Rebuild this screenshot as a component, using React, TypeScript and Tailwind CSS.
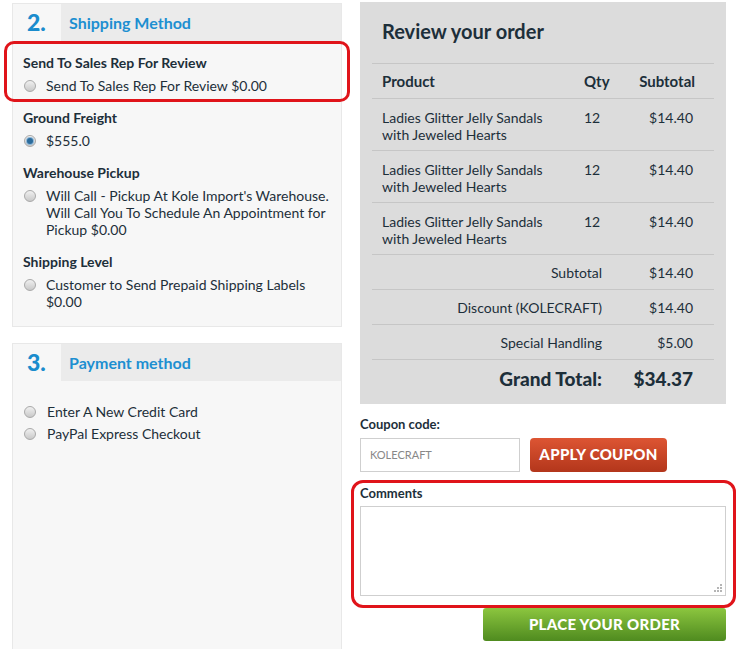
import React from "react";

const font = { fontFamily: "Lato, 'Open Sans', sans-serif" };

const items = [
  { name: "Ladies Glitter Jelly Sandals with Jeweled Hearts", qty: 12, subtotal: "$14.40" },
  { name: "Ladies Glitter Jelly Sandals with Jeweled Hearts", qty: 12, subtotal: "$14.40" },
  { name: "Ladies Glitter Jelly Sandals with Jeweled Hearts", qty: 12, subtotal: "$14.40" },
];

const totals = [
  { label: "Subtotal", value: "$14.40" },
  { label: "Discount (KOLECRAFT)", value: "$14.40" },
  { label: "Special Handling", value: "$5.00" },
];

function Radio({ checked = false }: { checked?: boolean }) {
  return (
    <span className="mt-[3px] flex h-[12px] w-[12px] shrink-0 items-center justify-center rounded-full border border-[#a9a9a9] bg-gradient-to-b from-[#f0f0f0] to-[#c9c9c9]">
      {checked && <span className="h-[6px] w-[6px] rounded-full bg-[#2c6c9c] ring-1 ring-[#8fb8d8]" />}
    </span>
  );
}

function Option({ children, checked }: { children: React.ReactNode; checked?: boolean }) {
  return (
    <label className="flex items-start gap-[10px] pl-[11px] text-[14px] leading-[17px] text-[#1d2f3a]">
      <Radio checked={checked} />
      <span>{children}</span>
    </label>
  );
}

function Group({ title, children }: { title: string; children: React.ReactNode }) {
  return (
    <div className="flex flex-col gap-[6px]">
      <div className="pl-[10px] text-[14px] font-bold leading-[17px] text-[#1d2f3a]">{title}</div>
      {children}
    </div>
  );
}

function PanelHeader({ num, title }: { num: string; title: string }) {
  return (
    <div className="flex h-[37px]">
      <div className="flex w-[48px] items-center pl-[14px] text-[23px] font-black text-[#1a8ccd]">{num}</div>
      <div className="flex flex-1 items-center bg-[#ebebeb] pl-[8px] text-[16px] font-bold text-[#1d8fd1]">{title}</div>
    </div>
  );
}

export default function App() {
  return (
    <div className="relative h-[649px] w-[739px] overflow-hidden bg-white" style={font}>
      <div className="flex gap-[18px] pt-[2px] pl-[12px]">
        {/* left column */}
        <div className="flex w-[330px] flex-col gap-[16px] pt-[1px]">
          <div className="h-[324px] border border-[#e8e8e8] bg-[#f7f7f7]">
            <PanelHeader num="2." title="Shipping Method" />
            <div className="flex flex-col gap-[15px] pt-[13px]">
              <Group title="Send To Sales Rep For Review">
                <Option>Send To Sales Rep For Review $0.00</Option>
              </Group>
              <Group title="Ground Freight">
                <Option checked>$555.0</Option>
              </Group>
              <Group title="Warehouse Pickup">
                <Option>
                  Will Call - Pickup At Kole Import's Warehouse. Will Call You To Schedule An Appointment for Pickup $0.00
                </Option>
              </Group>
              <Group title="Shipping Level">
                <Option>
                  Customer to Send Prepaid Shipping Labels
                  <br />
                  $0.00
                </Option>
              </Group>
            </div>
          </div>
          <div className="h-[320px] border border-[#e8e8e8] bg-[#f7f7f7]">
            <PanelHeader num="3." title="Payment method" />
            <div className="flex flex-col gap-[5px] pt-[22px]">
              <Option>
                <span className="pl-[1px]">Enter A New Credit Card</span>
              </Option>
              <Option>
                <span className="pl-[1px]">PayPal Express Checkout</span>
              </Option>
            </div>
          </div>
        </div>

        {/* right column */}
        <div className="flex w-[366px] flex-col">
          <div className="h-[402px] bg-[#dcdcdc] px-[12px]">
            <h2 className="pt-[16px] pb-[19px] pl-[10px] text-[20px] font-bold leading-[26px] text-[#1d2f3a]">Review your order</h2>
            <div className="border-t border-[#c6c6c6] text-[14px] text-[#1d2f3a]">
              <div className="flex h-[35px] items-center border-b border-[#c6c6c6] pl-[10px] text-[15px] font-bold">
                <span className="flex-1">Product</span>
                <span className="w-[40px]">Qty</span>
                <span className="w-[90px] pr-[19px] text-right">Subtotal</span>
              </div>
              {items.map((it, i) => (
                <div key={i} className="flex h-[52px] items-start border-b border-[#c6c6c6] pt-[10px] pl-[10px] leading-[17px]">
                  <span className="w-[185px]">{it.name}</span>
                  <span className="flex-1" />
                  <span className="w-[40px]">{it.qty}</span>
                  <span className="w-[90px] pr-[21px] text-right">{it.subtotal}</span>
                </div>
              ))}
              {totals.map((t) => (
                <div key={t.label} className="flex h-[35px] items-center border-b border-[#c6c6c6]">
                  <span className="flex-1 text-right">{t.label}</span>
                  <span className="w-[112px] pr-[21px] text-right">{t.value}</span>
                </div>
              ))}
              <div className="flex h-[38px] items-center text-[19px] font-black">
                <span className="flex-1 text-right">Grand Total:</span>
                <span className="w-[112px] pr-[21px] text-right">$34.37</span>
              </div>
            </div>
          </div>

          <div className="pt-[11px] text-[13px] font-bold text-[#1d2f3a]">Coupon code:</div>
          <div className="mt-[3px] flex gap-[10px]">
            <input
              className="h-[34px] w-[160px] border border-[#cfcfcf] bg-white px-[9px] text-[11px] text-[#888] outline-none"
              defaultValue="KOLECRAFT"
              style={font}
            />
            <button className="h-[34px] w-[137px] rounded-[4px] bg-gradient-to-b from-[#dd5533] to-[#b3361b] text-[15px] font-black tracking-[0.3px] text-white">
              APPLY COUPON
            </button>
          </div>

          <div className="pt-[12px] text-[13px] font-bold text-[#1d2f3a]">Comments</div>
          <div className="relative mt-[3px] h-[90px] border border-[#cfcfcf] bg-white">
            <svg className="absolute right-[3px] bottom-[3px]" width="10" height="10" viewBox="0 0 10 10">
              <g fill="#b5b5b5">
                <rect x="8" y="2" width="2" height="2" />
                <rect x="5" y="5" width="2" height="2" />
                <rect x="8" y="5" width="2" height="2" />
                <rect x="2" y="8" width="2" height="2" />
                <rect x="5" y="8" width="2" height="2" />
                <rect x="8" y="8" width="2" height="2" />
              </g>
            </svg>
          </div>
          <div className="mt-[12px] flex justify-end">
            <button className="h-[33px] w-[243px] rounded-[3px] bg-gradient-to-b from-[#8cc63f] to-[#4f8b1f] text-[15px] font-black tracking-[0.3px] text-white">
              PLACE YOUR ORDER
            </button>
          </div>
        </div>
      </div>

      {/* annotation outlines */}
      <div className="pointer-events-none absolute top-[41px] left-[4px] h-[61px] w-[346px] rounded-[10px] border-[3px] border-[#e0141a]" />
      <div className="pointer-events-none absolute top-[480px] left-[351px] h-[128px] w-[385px] rounded-[12px] border-[3px] border-[#e0141a]" />
    </div>
  );
}
